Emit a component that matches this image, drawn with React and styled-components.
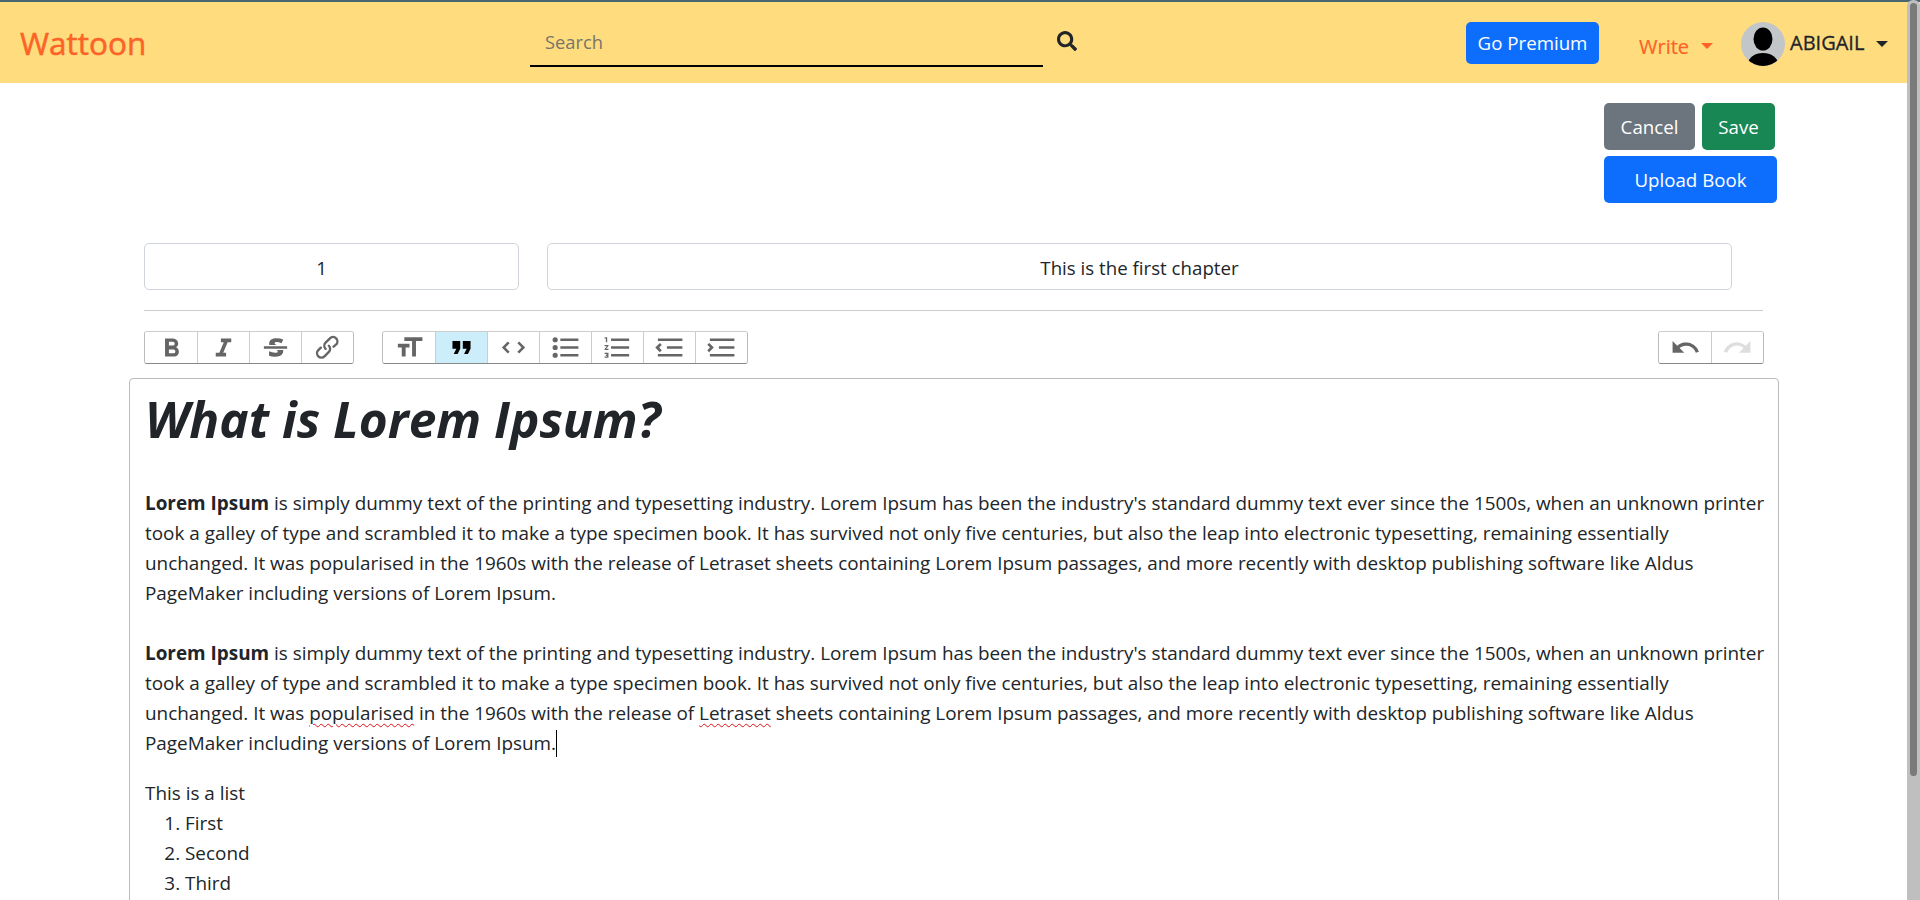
import React from "react"
import styled, { createGlobalStyle } from "styled-components"
import { FaSearch } from "react-icons/fa"

const GlobalStyle = createGlobalStyle`
  body {
    margin: 0;
    font-family: "Open Sans", "Noto Sans", sans-serif;
    font-size: 18.9px;
    line-height: 30px;
    color: #212529;
    background: #fff;
  }
  * {
    box-sizing: border-box;
  }
`

const Scrollbar = styled.div`
  position: fixed;
  top: 0;
  right: 0;
  bottom: 0;
  width: 13px;
  padding: 3px;
  background: #bfbfbf;
  border-radius: 6px 6px 0 0;
`

const ScrollThumb = styled.div`
  height: 773px;
  border-radius: 4px;
  background: #7a7a7a;
`

const TopLine = styled.div`
  height: 2px;
  background: #4a6670;
`

const Navbar = styled.nav`
  display: flex;
  align-items: center;
  height: 81px;
  padding-left: 20px;
  background: #ffdc7d;
`

const Logo = styled.a`
  flex: 0 0 510px;
  font-size: 31.5px;
  -webkit-text-stroke: 0.5px #fd6226;
  color: #fd6226;
`

const SearchBox = styled.form`
  display: flex;
  align-items: center;
  flex: 0 0 936px;
`

const SearchInput = styled.input`
  width: 513px;
  height: 46px;
  padding: 0 15px 3px;
  border: 0;
  border-bottom: 2px solid #000;
  margin-top: 2px;
  background: transparent;
  font: inherit;
  font-size: 18.3px;
  outline: none;

  &::placeholder {
    color: #77756a;
  }
`

const SearchButton = styled.span`
  display: flex;
  margin: -3px 0 0 14px;
  font-size: 20px;
  color: #212529;
`

const Button = styled.button`
  padding: 1px 0 0;
  border: 0;
  border-radius: 5px;
  background: ${(p) => p.$bg};
  color: #fff;
  font: inherit;
  font-size: 18.7px;
  width: ${(p) => p.$w}px;
  height: ${(p) => p.$h}px;
`

const NavMenu = styled.a`
  display: flex;
  align-items: center;
  color: ${(p) => p.$color};
  font-size: 20px;
  margin-top: ${(p) => p.$top}px;
`

const Caret = styled.span`
  width: 0;
  height: 0;
  margin-left: ${(p) => p.$gap}px;
  border-top: 6px solid currentColor;
  border-left: 6px solid transparent;
  border-right: 6px solid transparent;
`

const WriteMenu = styled(NavMenu)`
  margin-left: 40px;
  width: 102px;
`

const WriteLabel = styled.span`
  margin-top: 2px;
  -webkit-text-stroke: 0.2px #fd6226;
`

const UserMenu = styled(NavMenu)`
  gap: 5px;
`

const UserName = styled.span`
  margin-top: -1px;
  -webkit-text-stroke: 0.3px #212529;
`

const Avatar = styled.svg`
  width: 44px;
  height: 44px;
`

const Main = styled.main`
  width: 1650px;
  margin-left: 129px;
  min-height: 967px;
`

const ActionBar = styled.div`
  display: flex;
  flex-wrap: wrap;
  gap: 6px 7px;
  width: 173px;
  margin-left: 1475px;
  padding-top: 20px;
`

const Fields = styled.div`
  display: flex;
  gap: 28px;
  margin: 40px 0 0 15px;
`

const Field = styled.input`
  width: ${(p) => p.$w}px;
  height: 47px;
  padding: 1px ${(p) => p.$right}px 0 12px;
  border: 1px solid #ced4da;
  border-radius: 5px;
  color: #212529;
  font: inherit;
  font-size: 18.7px;
  text-align: center;
`

const Rule = styled.hr`
  width: 1619px;
  height: 1px;
  margin: 20px 0 20px 15px;
  border: 0;
  background: #ccc;
`

const Toolbar = styled.div`
  display: flex;
  height: 33px;
  margin: 0 15px;
  width: 1620px;
`

const ToolGroup = styled.div`
  display: flex;
  margin-left: ${(p) => p.$gap || 0}px;
  border: 1px solid #bbb;
  border-top-color: #ccc;
  border-bottom-color: #888;
  border-radius: 3px;
  overflow: hidden;
`

const ToolButton = styled.span`
  display: flex;
  align-items: center;
  justify-content: center;
  width: 52px;
  background: ${(p) => (p.$active ? "#cbeefa" : "#fff")};
  border-left: 1px solid #ccc;

  &:first-child {
    border-left: 0;
  }

  svg {
    width: 31px;
    height: 31px;
    fill: #000;
    opacity: ${(p) => (p.$active ? 1 : p.$disabled ? 0.125 : 0.6)};
  }
`

const Editor = styled.div`
  margin-top: 14px;
  min-height: 800px;
  padding: 0 15px;
  border: 1px solid #bbb;
  border-radius: 4px;
`

const Title = styled.h1`
  margin: 0;
  padding: 11px 0 40px;
  font-size: 49.6px;
  line-height: 58px;
  font-weight: 700;
  font-style: italic;
  white-space: nowrap;
`

const Paragraph = styled.p`
  margin: 0 0 ${(p) => p.$after}px;
  white-space: nowrap;
`

const Misspelt = styled.span`
  text-decoration: underline wavy #e0101a 1.2px;
  text-underline-offset: 3px;
`

const Cursor = styled.span`
  display: inline-block;
  width: 1px;
  height: 27px;
  margin-bottom: -7px;
  background: #000;
`

const List = styled.ol`
  margin: 0;
  padding-left: 40px;
`

const Icon = ({ d }) => (
  <svg viewBox="0 0 24 24">
    <path d={d} />
  </svg>
)

const icons = {
  bold: "M15.6 11.8c1-.7 1.6-1.8 1.6-2.8a4 4 0 0 0-4-4H7v14h7c2.1 0 3.7-1.7 3.7-3.8 0-1.5-.8-2.8-2.1-3.4zM10 7.5h3a1.5 1.5 0 1 1 0 3h-3v-3zm3.5 9H10v-3h3.5a1.5 1.5 0 1 1 0 3z",
  italic: "M10 5v3h2.2l-3.4 8H6v3h8v-3h-2.2l3.4-8H18V5h-8z",
  strike:
    "M12.73 14l.28.14c.26.15.45.3.57.44.12.14.18.3.18.5 0 .3-.15.56-.44.75-.3.2-.76.3-1.39.3A13.52 13.52 0 0 1 7 14.95v3.37a10.64 10.64 0 0 0 4.84.88c1.26 0 2.35-.19 3.28-.56.93-.37 1.64-.9 2.14-1.57s.74-1.45.74-2.32c0-.26-.02-.51-.06-.75h-5.21zm-5.5-4c-.08-.34-.12-.7-.12-1.1 0-1.29.52-2.3 1.58-3.02 1.05-.72 2.5-1.08 4.34-1.08 1.62 0 3.28.34 4.97 1l-1.3 2.93c-1.47-.6-2.73-.9-3.8-.9-.55 0-.96.08-1.2.26-.26.17-.38.38-.38.64 0 .27.16.52.48.74.17.12.53.3 1.05.53H7.23zM3 13h18v-2H3v2z",
  link: "M9.88 13.7a4.3 4.3 0 0 1 0-6.07l3.37-3.37a4.26 4.26 0 0 1 6.07 0 4.3 4.3 0 0 1 0 6.06l-1.96 1.72a.91.91 0 1 1-1.3-1.3l1.97-1.71a2.46 2.46 0 0 0-3.48-3.48l-3.38 3.37a2.46 2.46 0 0 0 0 3.48.91.91 0 1 1-1.3 1.3zM4.25 19.46a4.3 4.3 0 0 1 0-6.07l1.93-1.9a.91.91 0 1 1 1.3 1.3l-1.93 1.9a2.46 2.46 0 0 0 3.48 3.48l3.37-3.38c.96-.96.96-2.52 0-3.48a.91.91 0 1 1 1.3-1.3 4.3 4.3 0 0 1 0 6.07l-3.38 3.38a4.26 4.26 0 0 1-6.07 0z",
  heading: "M12 9v3H9v7H6v-7H3V9h9zM8 4h14v3h-5v12h-3V7H8V4z",
  quote: "M6 17h3l2-4V7H5v6h3zm8 0h3l2-4V7h-6v6h3z",
  code: "M18.2 12L15 15.2l1.4 1.4L21 12l-4.6-4.6L15 8.8l3.2 3.2zM5.8 12L9 8.8 7.6 7.4 3 12l4.6 4.6L9 15.2 5.8 12z",
  bullets:
    "M4 4a2 2 0 1 0 0 4 2 2 0 0 0 0-4zm0 6a2 2 0 1 0 0 4 2 2 0 0 0 0-4zm0 6a2 2 0 1 0 0 4 2 2 0 0 0 0-4zm4 3h14v-2H8v2zm0-6h14v-2H8v2zm0-8v2h14V5H8z",
  numbers:
    "M2 17h2v.5H3v1h1v.5H2v1h3v-4H2v1zm1-9h1V4H2v1h1v3zm-1 3h1.8L2 13.1v.9h3v-1H3.2L5 10.9V10H2v1zm5-6v2h14V5H7zm0 14h14v-2H7v2zm0-6h14v-2H7v2z",
  outdent:
    "M3 19h19v-2H3v2zm7-6h12v-2H10v2zm-8.3-.3l2.8 2.9L6 14.2 4 12l2-2-1.4-1.5L1 12l.7.7zM3 5v2h19V5H3z",
  indent:
    "M3 19h19v-2H3v2zm7-6h12v-2H10v2zm-6.9-1L1 14.2l1.4 1.4L6 12l-.7-.7-2.8-2.8L1 9.9 3.1 12zM3 5v2h19V5H3z",
  undo: "M12.5 8c-2.6 0-5 1-6.9 2.6L2 7v9h9l-3.6-3.6A8 8 0 0 1 20 16l2.4-.8a10.5 10.5 0 0 0-10-7.2z",
  redo: "M18.4 10.6a10.5 10.5 0 0 0-16.9 4.6L4 16a8 8 0 0 1 12.7-3.6L13 16h9V7l-3.6 3.6z",
}

const Lines = ({ children }) => (
  <>
    <strong>Lorem Ipsum</strong> is simply dummy text of the printing and typesetting industry. Lorem Ipsum has been the industry's standard dummy text ever since the 1500s, when an unknown printer
    <br />
    took a galley of type and scrambled it to make a type specimen book. It has survived not only five centuries, but also the leap into electronic typesetting, remaining essentially
    <br />
    {children}
  </>
)

const App = () => (
  <>
    <GlobalStyle />
    <TopLine />
    <Navbar>
      <Logo>Wattoon</Logo>
      <SearchBox>
        <SearchInput placeholder="Search" />
        <SearchButton>
          <FaSearch />
        </SearchButton>
      </SearchBox>
      <Button $bg="#0d6efd" $w={133} $h={42}>
        Go Premium
      </Button>
      <WriteMenu $color="#fd6226" $top={6}>
        <WriteLabel>Write</WriteLabel>
        <Caret $gap={12} />
      </WriteMenu>
      <UserMenu $color="#212529" $top={2}>
        <Avatar viewBox="0 0 44 44">
          <defs>
            <clipPath id="avatar-clip">
              <circle cx="22" cy="22" r="22" />
            </clipPath>
          </defs>
          <circle cx="22" cy="22" r="22" fill="#c3c6c9" />
          <g clipPath="url(#avatar-clip)" fill="#000">
            <ellipse cx="22" cy="17" rx="9.5" ry="11.5" />
            <ellipse cx="22" cy="42" rx="15" ry="11" />
          </g>
        </Avatar>
        <UserName>ABIGAIL</UserName>
        <Caret $gap={7} />
      </UserMenu>
    </Navbar>
    <Main>
      <ActionBar>
        <Button $bg="#6c757d" $w={91} $h={47}>
          Cancel
        </Button>
        <Button $bg="#198754" $w={73} $h={47}>
          Save
        </Button>
        <Button $bg="#0d6efd" $w={173} $h={47}>
          Upload Book
        </Button>
      </ActionBar>
      <Fields>
        <Field $w={375} $right={32} defaultValue="1" />
        <Field $w={1185} $right={12} defaultValue="This is the first chapter" />
      </Fields>
      <Rule />
      <Toolbar>
        <ToolGroup>
          <ToolButton><Icon d={icons.bold} /></ToolButton>
          <ToolButton><Icon d={icons.italic} /></ToolButton>
          <ToolButton><Icon d={icons.strike} /></ToolButton>
          <ToolButton><Icon d={icons.link} /></ToolButton>
        </ToolGroup>
        <ToolGroup $gap={28}>
          <ToolButton><Icon d={icons.heading} /></ToolButton>
          <ToolButton $active><Icon d={icons.quote} /></ToolButton>
          <ToolButton><Icon d={icons.code} /></ToolButton>
          <ToolButton><Icon d={icons.bullets} /></ToolButton>
          <ToolButton><Icon d={icons.numbers} /></ToolButton>
          <ToolButton><Icon d={icons.outdent} /></ToolButton>
          <ToolButton><Icon d={icons.indent} /></ToolButton>
        </ToolGroup>
        <ToolGroup $gap={910}>
          <ToolButton><Icon d={icons.undo} /></ToolButton>
          <ToolButton $disabled><Icon d={icons.redo} /></ToolButton>
        </ToolGroup>
      </Toolbar>
      <Editor>
        <Title>What is Lorem Ipsum?</Title>
        <Paragraph $after={30}>
          <Lines>
            unchanged. It was popularised in the 1960s with the release of Letraset sheets containing Lorem Ipsum passages, and more recently with desktop publishing software like Aldus
            <br />
            PageMaker including versions of Lorem Ipsum.
          </Lines>
        </Paragraph>
        <Paragraph $after={20}>
          <Lines>
            unchanged. It was <Misspelt>popularised</Misspelt> in the 1960s with the release of <Misspelt>Letraset</Misspelt> sheets containing Lorem Ipsum passages, and more recently with desktop publishing software like Aldus
            <br />
            PageMaker including versions of Lorem Ipsum.<Cursor />
          </Lines>
        </Paragraph>
        <div>This is a list</div>
        <List>
          <li>First</li>
          <li>Second</li>
          <li>Third</li>
        </List>
      </Editor>
    </Main>
    <Scrollbar>
      <ScrollThumb />
    </Scrollbar>
  </>
)

export default App
